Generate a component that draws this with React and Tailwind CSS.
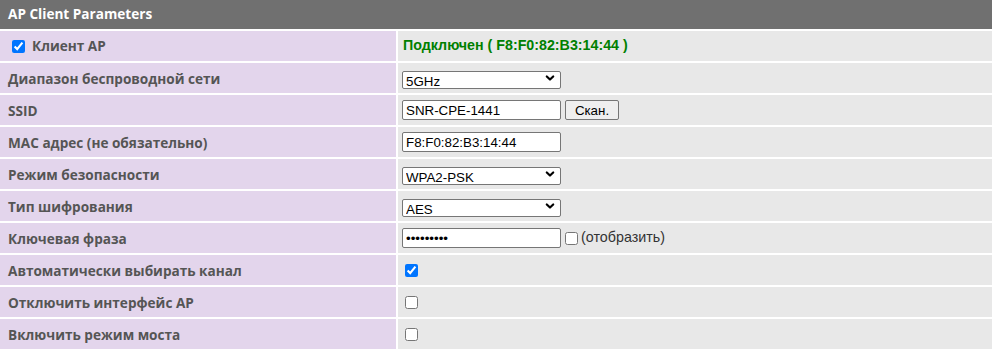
import React from 'react';

const Chevron = () => (
    <svg className="absolute right-[6px] top-1/2 -translate-y-1/2 w-[10px] h-[10px] pointer-events-none" viewBox="0 0 10 10" fill="none" stroke="#000" strokeWidth="2.2" strokeLinecap="round" strokeLinejoin="round">
        <path d="M1.8 3.5l3.2 3 3.2-3" />
    </svg>
);

function Select({ value }) {
    return (
        <div className="relative w-[159px] h-[18px]">
            <select defaultValue={value} className="appearance-none w-full h-full bg-white border border-[#767676] rounded-[2px] pl-[3px] text-[13.33px] text-black outline-none">
                <option>{value}</option>
            </select>
            <Chevron />
        </div>
    );
}

function TextInput({ value, type = 'text' }) {
    return (
        <input
            type={type}
            defaultValue={value}
            className="w-[159px] h-[20px] bg-white border border-[#767676] rounded-[2px] px-[3px] text-[13.33px] text-black outline-none"
        />
    );
}

const rows = [
    { label: 'Диапазон беспроводной сети', value: <Select value="5GHz" /> },
    {
        label: 'SSID',
        value: (
            <div className="flex items-center gap-[4px]">
                <TextInput value="SNR-CPE-1441" />
                <button className="w-[54px] h-[20px] bg-[#efefef] border border-[#767676] rounded-[2px] text-[13.33px] text-black">Скан.</button>
            </div>
        )
    },
    { label: 'MAC адрес (не обязательно)', value: <TextInput value="F8:F0:82:B3:14:44" /> },
    { label: 'Режим безопасности', value: <Select value="WPA2-PSK" /> },
    { label: 'Тип шифрования', value: <Select value="AES" /> },
    {
        label: 'Ключевая фраза',
        value: (
            <div className="flex items-center">
                <TextInput type="password" value="123456789" />
                <input type="checkbox" className="ml-[4px] mr-[3px] w-[13px] h-[13px]" />
                <span className="text-[14.3px] text-[#333]">(отобразить)</span>
            </div>
        )
    },
    { label: 'Автоматически выбирать канал', value: <input type="checkbox" defaultChecked className="ml-[3px] w-[13px] h-[13px]" /> },
    { label: 'Отключить интерфейс AP', value: <input type="checkbox" className="ml-[3px] w-[13px] h-[13px]" /> },
    { label: 'Включить режим моста', value: <input type="checkbox" className="ml-[3px] w-[13px] h-[13px]" /> }
];

export default function App() {
    return (
        <div className="w-[992px] h-[351px] bg-white font-['Liberation_Sans',Arial,sans-serif]">
            <div className="grid grid-cols-[396px_1fr] gap-[2px]">
                {/* Header */}
                <div className="col-span-2 h-[29px] bg-[#707070] flex items-center px-[8px] text-white text-[13.6px] font-bold font-['Open_Sans',sans-serif]">
                    AP Client Parameters
                </div>

                {/* Client AP row */}
                <div className="h-[30px] bg-[#e3d5ec] flex items-center pl-[12px] pt-[1px] text-[13.6px] font-bold text-[#555] font-['Open_Sans',sans-serif]">
                    <input type="checkbox" defaultChecked className="w-[13px] h-[13px] mr-[7px]" />
                    Клиент AP
                </div>
                <div className="h-[30px] bg-[#e8e8e8] flex items-center pl-[5px] text-[14.25px] font-bold text-[#008000]">
                    Подключен ( F8:F0:82:B3:14:44 )
                </div>

                {rows.map((row, idx) => (
                    <React.Fragment key={idx}>
                        <div className="h-[30px] bg-[#e3d5ec] flex items-center px-[8px] pt-[2px] text-[13.6px] font-bold text-[#555] font-['Open_Sans',sans-serif]">
                            {row.label}
                        </div>
                        <div className="h-[30px] bg-[#e8e8e8] flex items-center pl-[4px]">
                            {row.value}
                        </div>
                    </React.Fragment>
                ))}
            </div>
        </div>
    );
}
